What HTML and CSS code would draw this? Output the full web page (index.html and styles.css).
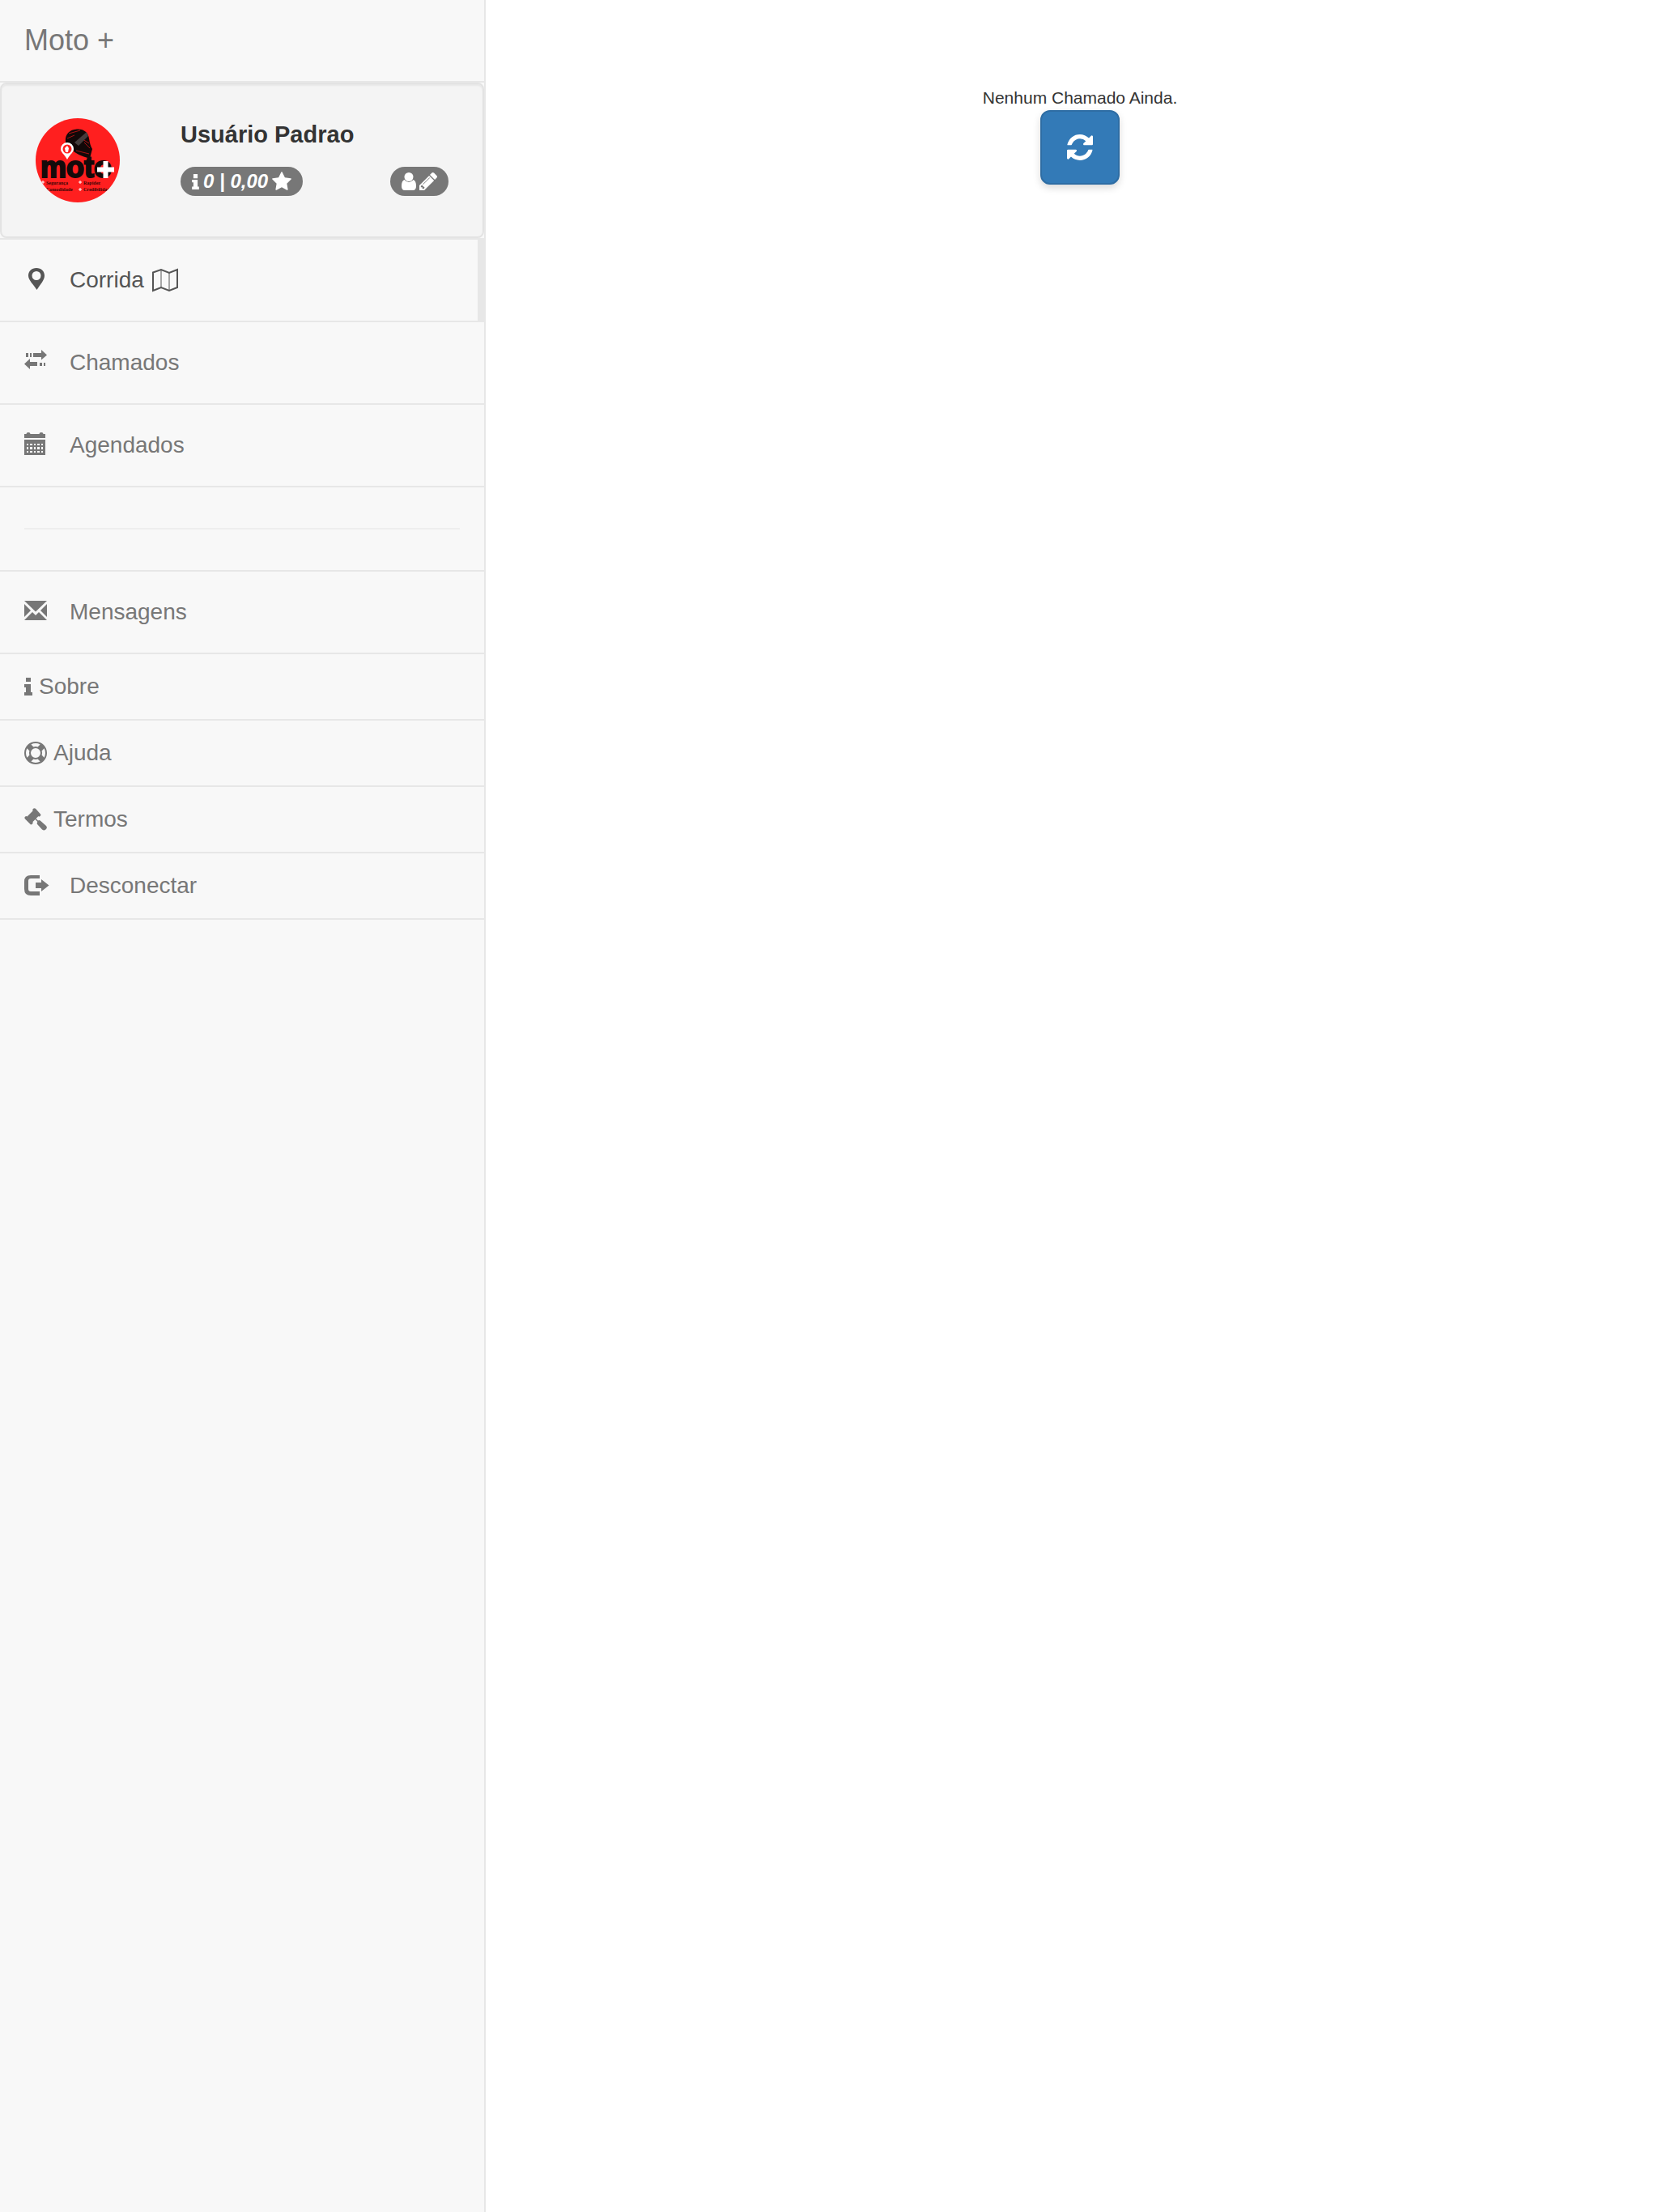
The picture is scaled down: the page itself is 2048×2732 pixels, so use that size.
FILE: index.html
```html
<!DOCTYPE html>
<html lang="pt-BR">
<head>
<meta charset="utf-8">
<meta name="viewport" content="width=device-width, initial-scale=1">
<title>Moto +</title>
<link rel="stylesheet" href="styles.css">
</head>
<body>
<div class="layout">
  <aside class="sidebar">
    <header class="brand"><a href="#">Moto +</a></header>

    <section class="profile">
      <svg class="avatar" viewBox="0 0 104 104" role="img" aria-label="Moto +">
        <defs><clipPath id="disc"><circle cx="52" cy="52" r="52"/></clipPath></defs>
        <g clip-path="url(#disc)">
          <rect width="104" height="104" fill="#ff1f1f"/>
          <path d="M37 29C36 20 42 14 51 13.500C60 13 65 18 66 25C67 31 68 35 70 38L67 49.500C60 48 54 46 47 41L45 34L37 33Z" fill="#120808"/>
          <path d="M41 19L55 15M39 25L48 21M58 26L66 31M60 30L67 37M50 40L66 44" stroke="#a91212" stroke-width="1" fill="none"/>
          <path d="M48 30L63 17L65 22L53 34Z" fill="#443c3c"/>
          <path d="M31 38a8 8 0 1 1 16 0c0 4-4 6-8 13c-4-7-8-9-8-13z" fill="#fff"/>
          <circle cx="39" cy="38" r="5.500" fill="#ff1f1f"/>
          <path d="M39 34l2 3-1 5h-3l-1-5z" fill="#fff"/>
          <text class="logo-word" x="6" y="73">moto</text>
          <path d="M83.500 53h6v7.500H97v6h-7.500V74h-6v-7.500H76v-6h7.500z" fill="#fff"/>
          <text class="logo-tag" x="13" y="82">Segurança</text>
          <text class="logo-tag" x="59" y="82">Rapidez</text>
          <text class="logo-tag" x="13" y="90">Comodidade</text>
          <text class="logo-tag" x="59" y="90">Credibilidade</text>
          <path d="M7 79h4M9 77v4M53 79h4M55 77v4M53 88h4M55 86v4" stroke="#fff" stroke-width="1"/>
        </g>
      </svg>
      <div class="profile-body">
        <h1 class="profile-name">Usuário Padrao</h1>
        <div class="profile-badges">
          <span class="badge">
            <svg class="b-info" viewBox="0 0 10 22" aria-hidden="true"><path d="M2 0h6v6H2zM0 8h8v10h2v4H0v-4h2v-6H0z"/></svg>
            <em>0 | 0,00</em>
            <svg class="b-star" viewBox="64 96 1664 1536" aria-hidden="true"><path d="M1728 647q0 22-26 48l-363 354 86 500q1 7 1 20 0 21-10.500 35.500t-30.500 14.500q-19 0-40-12l-449-236-449 236q-22 12-40 12-21 0-31.500-14.500t-10.500-35.500q0-6 2-20l86-500-364-354q-25-27-25-48 0-37 56-46l502-73 225-455q19-41 49-41t49 41l225 455 502 73q56 9 56 46z"/></svg>
          </span>
          <button class="badge badge-edit" type="button" aria-label="Editar perfil">
            <svg class="b-user" viewBox="0 0 18 22" aria-hidden="true"><circle cx="9" cy="5.500" r="5.500"/><path d="M3.500 9Q6 12 9 12T14.500 9Q18 10 18 17Q18 22 14 22H4Q0 22 0 17Q0 10 3.500 9z"/></svg>
            <svg class="b-pencil" viewBox="128 149 1515 1515" aria-hidden="true"><path d="M491 1536l91-91-235-235-91 91v107h128v128h107zm523-928q0-22-22-22-10 0-17 7l-542 542q-7 7-7 17 0 22 22 22 10 0 17-7l542-542q7-7 7-17zm-54-192l416 416-832 832h-416v-416zm683 96q0 53-37 90l-166 166-416-416 166-165q36-38 90-38 53 0 91 38l235 234q37 39 37 91z"/></svg>
          </button>
        </div>
      </div>
    </section>

    <nav>
      <ul class="menu">
        <li><a class="item wide tall active" href="#">
          <svg class="icon raised" viewBox="0 0 28 28" aria-hidden="true"><path fill-rule="evenodd" d="M15 1C9 1 5 5 5 10.500C5 16 11 21 15.500 28C20 21 25 16 25 10.500C25 5 21 1 15 1zM15 5a5.500 5.500 0 1 1 0 11a5.500 5.500 0 0 1 0-11z"/></svg>
          <span>Corrida</span>
          <svg class="icon-map" viewBox="0 0 32 28" aria-hidden="true"><path d="M1 4.500L11 1L21 5L31 1V23L21 27L11 23L1 27z" stroke-width="2"/><path d="M11 1V23M21 5V27" stroke-width="1"/></svg>
        </a></li>
        <li><a class="item wide tall" href="#">
          <svg class="icon raised" viewBox="0 0 28 28" aria-hidden="true"><path d="M2 4h3v5H2zM7 4h2v5H7zM11 4h10V0l7 6.500l-7 6V9H11zM26 16h-2v4h2zM22 16h-3v4h3zM16 15H7v-4l-7 6.500l7 6.500v-4h9z"/></svg>
          <span>Chamados</span>
        </a></li>
        <li><a class="item wide tall" href="#">
          <svg class="icon raised" viewBox="0 0 28 28" aria-hidden="true"><path fill-rule="evenodd" d="M0 2h2.500Q2.500 0 5 0T7.500 2h11Q18.500 0 21 0T23.500 2H26v5H0zM0 9h26v19H0zM3 14v2h2v-2zM7 14v2h3v-2zM12 14v2h2v-2zM16 14v2h3v-2zM21 14v2h2v-2zM3 18v3h2v-3zM7 18v3h3v-3zM12 18v3h2v-3zM16 18v3h3v-3zM21 18v3h2v-3zM3 23v2h2v-2zM7 23v2h3v-2zM12 23v2h2v-2zM16 23v2h3v-2zM21 23v2h2v-2z"/></svg>
          <span>Agendados</span>
        </a></li>
        <li class="divider"><hr></li>
        <li><a class="item wide tall" href="#">
          <svg class="icon raised" viewBox="0 0 28 28" aria-hidden="true"><path d="M0 2h28L14 15.500zM0 6l8 8l-8 8zM28 6v16l-8-8zM0 26l10-10l4 4l4-4l10 10z"/></svg>
          <span>Mensagens</span>
        </a></li>
        <li><a class="item" href="#">
          <svg class="icon-info" viewBox="0 0 10 22" aria-hidden="true"><path d="M2 0h6v5H2zM0 8h8v10h2v4H0v-4h2v-6H0z"/></svg>
          <span>Sobre</span>
        </a></li>
        <li><a class="item" href="#">
          <svg class="icon" viewBox="0 0 1792 1792" aria-hidden="true"><path d="M896 0q182 0 348 71t286 191 191 286 71 348-71 348-191 286-286 191-348 71-348-71-286-191-191-286-71-348 71-348 191-286 286-191 348-71zm0 128q-190 0-361 90l194 194q82-28 167-28t167 28l194-194q-171-90-361-90zm-678 1129l194-194q-28-82-28-167t28-167l-194-194q-90 171-90 361t90 361zm678 407q190 0 361-90l-194-194q-82 28-167 28t-167-28l-194 194q171 90 361 90zm0-384q159 0 271.500-112.500t112.500-271.500-112.500-271.500-271.500-112.500-271.500 112.500-112.500 271.500 112.500 271.500 271.500 112.500zm484-217l194 194q90-171 90-361t-90-361l-194 194q28 82 28 167t-28 167z"/></svg>
          <span>Ajuda</span>
        </a></li>
        <li><a class="item" href="#">
          <svg class="icon" viewBox="0 0 28 28" aria-hidden="true"><path d="M11 .800Q12.500-.500 14 .800L20 7.500Q21 9 19.500 10T17.500 10L14.500 13L17 15.500Q18.500 14.500 20 15.800L26.500 21.500Q29 23.500 27 26T22 26.500L16.500 20.500Q15 19 16.300 17L13.500 14L10.500 17Q11 19 9.500 20T7 19.500L1 13.500Q-.200 12 1 10.800T3.500 10.500L10.500 3.500Q10 2 11 .800z"/></svg>
          <span>Termos</span>
        </a></li>
        <li><a class="item wide" href="#">
          <svg class="icon" viewBox="0 0 28 28" aria-hidden="true"><path d="M19 1v4H8q-3 0-3 3v10q0 3 3 3h11v5H8q-8 0-8-8V9q0-8 8-8zM21 6l9.500 7.500L21 21v-4h-7v-7h7z"/></svg>
          <span>Desconectar</span>
        </a></li>
      </ul>
    </nav>
  </aside>

  <main class="content">
    <p class="empty">Nenhum Chamado Ainda.</p>
    <button class="refresh" type="button" aria-label="Atualizar">
      <svg viewBox="0 128 1536 1536" aria-hidden="true"><path d="M1511 1056q0 5-1 7-64 268-268 434.500t-478 166.500q-146 0-282.500-55t-243.500-157l-129 129q-19 19-45 19t-45-19-19-45v-448q0-26 19-45t45-19h448q26 0 45 19t19 45-19 45l-137 137q71 66 161 102t187 36q134 0 250-65t186-179q11-17 53-117 8-23 30-23h192q13 0 22.500 9.500t9.500 22.500zm25-800v448q0 26-19 45t-45 19h-448q-26 0-45-19t-19-45 19-45l138-138q-148-137-349-137-134 0-250 65t-186 179q-11 17-53 117-8 23-30 23h-199q-13 0-22.500-9.500t-9.500-22.500v-7q65-268 270-434.500t480-166.500q146 0 284 55.500t245 156.500l130-129q19-19 45-19t45 19 19 45z"/></svg>
    </button>
  </main>
</div>
</body>
</html>
```
FILE: styles.css
```css
* { box-sizing: border-box; }

body {
  margin: 0;
  background: #fff;
  color: #333;
  font: 28px/40px "Liberation Sans", Arial, sans-serif;
}

a { color: inherit; text-decoration: none; }
svg { display: block; flex: none; fill: currentColor; overflow: visible; }

.layout { display: flex; min-height: 100vh; }

/* Sidebar */
.sidebar {
  flex: 0 0 600px;
  background: #f8f8f8;
  border-right: 2px solid #e7e7e7;
  color: #777;
}
.brand {
  padding: 30px;
  border-bottom: 2px solid #e7e7e7;
  font-size: 36px;
}

/* Profile card */
.profile {
  display: flex;
  gap: 75px;
  padding: 42px;
  background: #f4f4f4;
  border: 2px solid #e3e3e3;
  border-radius: 8px;
  box-shadow: inset 0 2px 2px rgba(0, 0, 0, .05);
}
.avatar { width: 104px; height: 104px; }
.logo-word {
  font: bold 36px "Liberation Sans Narrow", "Liberation Sans", sans-serif;
  fill: #140a0a;
  stroke: #140a0a;
  stroke-width: 2px;
}
.logo-tag { font: bold 6px "Liberation Serif", serif; fill: #3a0505; }
.profile-body { flex: 1; }
.profile-name { margin: 0; font-size: 29px; line-height: 40px; color: #333; }
.profile-badges { display: flex; justify-content: space-between; margin-top: 20px; }
.badge {
  display: flex;
  align-items: center;
  gap: 5px;
  height: 36px;
  padding: 0 14px;
  border: 0;
  border-radius: 20px;
  background: #777;
  color: #fff;
  font: bold 24px/36px "Liberation Sans", Arial, sans-serif;
}
.badge-edit { gap: 4px; }
.b-info { width: 9px; height: 19px; }
.b-star { width: 24px; height: 22px; }
.b-user { width: 18px; height: 22px; }
.b-pencil { width: 22px; height: 22px; }

/* Menu */
.menu { margin: 0; padding: 0; list-style: none; border-top: 2px solid #e7e7e7; }
.menu li { border-bottom: 2px solid #e7e7e7; }
.item { display: flex; align-items: center; gap: 8px; padding: 20px 30px; }
.item.tall { padding-block: 30px; }
.item.wide .icon { margin-right: 20px; }
.item.active { color: #555; border-right: 8px solid #e7e7e7; }
.icon { width: 28px; height: 28px; }
.icon.raised { margin-bottom: 4px; }
.icon-info { width: 10px; height: 22px; }
.icon-map { width: 32px; height: 28px; margin-left: 2px; fill: none; stroke: currentColor; }
.divider { padding: 50px 30px; }
.divider hr { margin: 0; border: 0; border-top: 2px solid #eee; }

/* Content */
.content {
  flex: 1;
  display: flex;
  flex-direction: column;
  align-items: center;
  padding: 106px 0 0 20px;
}
.empty { margin: 0; font-size: 21px; line-height: 30px; }
.refresh {
  padding: 28px 31px;
  border: 2px solid #2e6da4;
  border-radius: 12px;
  background: #337ab7;
  color: #fff;
  box-shadow: 0 4px 10px rgba(0, 0, 0, .15);
}
.refresh svg { width: 32px; height: 32px; }
```
